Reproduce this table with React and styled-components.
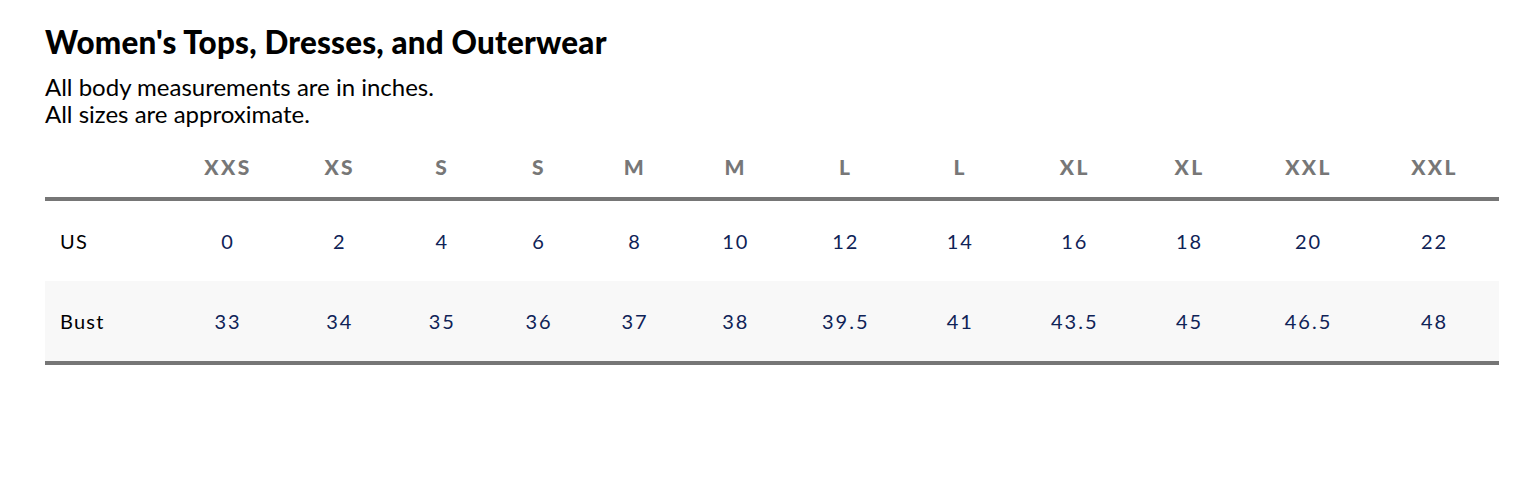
import React from "react";
import styled, { createGlobalStyle } from "styled-components";

const Global = createGlobalStyle`
  html, body { margin: 0; padding: 0; background: #fff; }
  body { font-family: "Lato", "Liberation Sans", sans-serif; }
`;

const Page = styled.div`
  padding: 25px 37px 0 45px;
`;

const Title = styled.h2`
  margin: 0;
  font-family: "Lato", sans-serif;
  font-weight: 900;
  font-size: 31.4px;
  line-height: 34px;
  color: #000;
  letter-spacing: 0.2px;
`;

const Note = styled.p`
  margin: 14px 0 0;
  font-family: "Lato", sans-serif;
  font-weight: 400;
  font-size: 24px;
  line-height: 27px;
  color: #000;
`;

const COLS = "125px 116px 107.5px 97.5px 96px 96px 105.5px 114.5px 114.5px 114.5px 115px 123px 129px";

const Table = styled.div`
  width: 1454px;
  border-bottom: 4px solid #767676;
`;

const Row = styled.div`
  display: grid;
  grid-template-columns: ${COLS};
  align-items: center;
  box-sizing: border-box;
  height: ${(p) => p.$h}px;
  padding-top: ${(p) => (p.$head ? 8 : 0)}px;
  background: ${(p) => (p.$shade ? "#f8f8f8" : "transparent")};
  border-bottom: ${(p) => (p.$head ? "4px solid #767676" : "none")};
`;

const HeadCell = styled.div`
  text-align: center;
  font-family: "Lato", sans-serif;
  font-weight: 900;
  font-size: 21px;
  letter-spacing: 2.4px;
  color: #777;
`;

const Label = styled.div`
  padding-left: 15px;
  font-family: "Lato", sans-serif;
  font-size: 20px;
  letter-spacing: 1.2px;
  color: #000;
`;

const Cell = styled.div`
  text-align: center;
  font-family: "Lato", sans-serif;
  font-size: 20px;
  letter-spacing: 2px;
  color: #0f2357;
`;

const sizes = ["XXS", "XS", "S", "S", "M", "M", "L", "L", "XL", "XL", "XXL", "XXL"];
const rows = [
  { label: "US", values: ["0", "2", "4", "6", "8", "10", "12", "14", "16", "18", "20", "22"] },
  { label: "Bust", values: ["33", "34", "35", "36", "37", "38", "39.5", "41", "43.5", "45", "46.5", "48"], shade: true },
];

export default function App() {
  return (
    <Page>
      <Global />
      <Title>Women's Tops, Dresses, and Outerwear</Title>
      <Note>
        All body measurements are in inches.
        <br />
        All sizes are approximate.
      </Note>
      <Table>
        <Row $head $h={74}>
          <div />
          {sizes.map((s, i) => (
            <HeadCell key={i}>{s}</HeadCell>
          ))}
        </Row>
        {rows.map((r) => (
          <Row key={r.label} $h={80} $shade={r.shade}>
            <Label>{r.label}</Label>
            {r.values.map((v, i) => (
              <Cell key={i}>{v}</Cell>
            ))}
          </Row>
        ))}
      </Table>
    </Page>
  );
}
